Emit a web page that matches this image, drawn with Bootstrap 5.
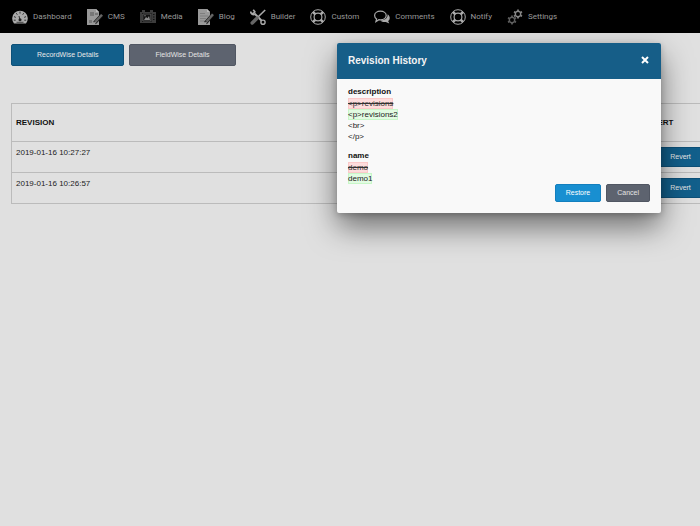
<!DOCTYPE html>
<html lang="en">
<head>
<meta charset="utf-8">
<meta name="viewport" content="width=device-width, initial-scale=1">
<title>Revision History</title>
<link rel="stylesheet" href="https://cdn.jsdelivr.net/npm/bootstrap@5.3.0/dist/css/bootstrap.min.css">
<style>
body { font-family: "Liberation Sans", Arial, sans-serif; font-size: 8px; line-height: 12px; background: #e0e0e0; color: #222; min-height: 100vh; }
.topbar { background: #000; height: 33px; padding: 0 12px; gap: 15px; }
.topbar a { color: #999; font-family: Roboto, sans-serif; gap: 5px; line-height: 16px; }
.topbar svg { width: 16px; height: 16px; flex: none; }
.btn { --bs-btn-font-size: 7px; --bs-btn-line-height: 12px; --bs-btn-padding-x: 10px; --bs-btn-padding-y: 2px; --bs-btn-border-radius: 2px; }
.btn-blue { --bs-btn-color: #e8e8e8; --bs-btn-bg: #125f8b; --bs-btn-border-color: #0d5078; --bs-btn-hover-bg: #0d5078; --bs-btn-hover-color: #fff; }
.btn-slate { --bs-btn-color: #e4e4e4; --bs-btn-bg: #5d636f; --bs-btn-border-color: #515763; --bs-btn-hover-bg: #515763; --bs-btn-hover-color: #fff; }
.btn-restore { --bs-btn-color: #fff; --bs-btn-bg: #188fd1; --bs-btn-border-color: #137fbe; --bs-btn-hover-bg: #137fbe; --bs-btn-hover-color: #fff; }
.view-switch { padding: 11px 11px 0; gap: 5px; }
.view-switch .btn { padding: 4px 25px; }
.page-shell { overflow-x: hidden; }
.revision-table { margin: 37px 0 0 11px; width: calc(100% + 13px); }
.revision-table th, .revision-table td { border-top: 1px solid #bbb; border-bottom: 1px solid #bbb; padding: 5px 4px; vertical-align: top; }
.revision-table th { height: 38px; vertical-align: middle; color: #111; }
.revision-table td { height: 31px; line-height: 12px; }
.revision-table tr > :first-child { border-left: 1px solid #bbb; }
.revision-table tr > :last-child { width: 87px; }
.revision-table .btn { padding: 3px 10px; display: block; }
.dialog-place { position: absolute; top: 43px; right: 39px; width: 324px; }
.dialog-place .modal-content { border: 0; border-radius: 2px; background: #f9f9f9; box-shadow: 0 14px 30px rgba(0,0,0,.5), 0 2px 6px rgba(0,0,0,.2); overflow: hidden; }
.dialog-place .modal-header { background: #165e88; color: #f4f4f4; padding: 10px 11px; border: 0; border-radius: 0; height: 36px; }
.dialog-place .modal-title { font-size: 10px; line-height: 16px; font-weight: 700; }
.dismiss { background: none; border: 0; padding: 0; width: 10px; height: 10px; line-height: 0; color: #fff; }
.dialog-place .modal-body { padding: 7px 11px 0; line-height: 11px; }
.diff-block + .diff-block { margin-top: 8px; }
.diff-block h2 { font-size: 8px; line-height: 12px; font-weight: 700; margin: 0; color: #111; }
.diff-block del, .diff-block ins { display: block; width: fit-content; }
.diff-block del { background: #fddcdc; box-shadow: inset 0 0 0 1px #fbc9c9; color: #333; }
.diff-block ins { background: #e2fbe2; box-shadow: inset 0 0 0 1px #c8f7c8; text-decoration: none; }
.dialog-place .modal-footer { border: 0; padding: 0 11px 11px; gap: 5px; }
.dialog-place .modal-footer > * { margin: 0; }
</style>
<script src="https://cdn.jsdelivr.net/npm/bootstrap@5.3.0/dist/js/bootstrap.bundle.min.js"></script>
</head>
<body>
<svg class="d-none" aria-hidden="true">
  <symbol id="ring" viewBox="0 0 16 16"><g fill="none" stroke="#aaa"><circle cx="8" cy="8" r="7.3"/><circle cx="8" cy="8" r="3.9" stroke-width="1.2"/><path stroke-width="2.6" d="M3 3l2.4 2.4M13 3l-2.4 2.4M3 13l2.4-2.4M13 13l-2.4-2.4"/></g></symbol>
  <symbol id="cog" viewBox="-5 -5 10 10"><g fill="none" stroke="currentColor"><circle r="2.7" stroke-width="1.4"/><path stroke-width="1.7" d="M0-3V-4.6M0 3V4.6M2.6-1.5L4-2.3M2.6 1.5L4 2.3M-2.6-1.5L-4-2.3M-2.6 1.5L-4 2.3"/></g></symbol>
</svg>
<nav class="topbar d-flex align-items-center text-nowrap" aria-label="Main">
  <a href="#" class="d-flex align-items-center text-decoration-none"><svg viewBox="0 0 16 16"><path fill="#aaa" d="M2 14.5a7.8 7.8 0 1 1 12 0z"/><g stroke="#222" stroke-width=".9"><path d="M8 2.6v2M4.300 4.200l1 1.500M11.700 4.200l-1 1.500M2 7.600l1.800.8M14 7.600l-1.800.8M1.800 11.200h1.900M12.300 11.200h1.900M8 11l-1-4"/></g><circle cx="8" cy="10.800" r="1.500" fill="#222"/><path stroke="#444" d="M4.500 13.300h7"/></svg>Dashboard</a>
  <a href="#" class="d-flex align-items-center text-decoration-none"><svg viewBox="0 0 16 16"><path fill="#999" d="M0 0h9l3 3v13H0z"/><path fill="#777" d="M3 3h4v4H3zM8 4h3v2H8zM2 11h3v3H2z"/><path fill="#bbb" d="M9 0v3h3z"/><path stroke="#111" stroke-width="3.500" d="M7.500 14L15 6"/><path stroke="#666" stroke-width="2.400" d="M8.300 13L15 5.800"/><path fill="#aaa" d="M7 15l.5-2.600 1.800 1.500z"/></svg>CMS</a>
  <a href="#" class="d-flex align-items-center text-decoration-none"><svg viewBox="0 0 16 16"><path fill="#3c3c3c" d="M2 1h3v2h5V1h3v2h3v11H0V3h2z"/><path fill="#111" d="M2 4h9.500v9H2z"/><path fill="none" stroke="#666" stroke-width=".8" d="M2.800 5h8v7h-8z"/><path fill="#888" d="M4 11l2-3 1.400 1.300L9 7l1 4z"/><circle cx="5" cy="6.700" r=".7" fill="#888"/><path stroke="#111" d="M13 5.500h1.500M13 8h1.500M13 10.500h1.500"/></svg>Media</a>
  <a href="#" class="d-flex align-items-center text-decoration-none"><svg viewBox="0 0 16 16"><path fill="#999" d="M0 0h9l3 3v13H0z"/><path fill="#bbb" d="M9 0v3h3z"/><path stroke="#777" stroke-width=".8" d="M2 4.500h5M2 7h8M2 9.500h6M2 12h5"/><path stroke="#111" stroke-width="3.500" d="M7.500 14L15 5.500"/><path stroke="#666" stroke-width="2.400" d="M8.500 12.800L15 5.200"/><path fill="#aaa" d="M7 15l.5-2.600 1.800 1.500z"/></svg>Blog</a>
  <a href="#" class="d-flex align-items-center text-decoration-none"><svg viewBox="0 0 16 16"><g fill="none"><path stroke="#aaa" stroke-width="2" d="M4.500 4.500l7.200 7.200"/><path stroke="#aaa" stroke-width="1.700" d="M3.200.8l1.600 2-1.400 2-2.600-.8M.8 2.500a2.800 2.800 0 0 0 4 2.800"/><circle cx="13" cy="13.200" r="2.100" stroke="#aaa" stroke-width="1.400"/><path stroke="#aaa" stroke-width="1.600" d="M15.200 1L8.500 7.500"/><path stroke="#666" stroke-width="3.500" stroke-linecap="round" d="M7 9.200L2.200 14"/></g></svg>Builder</a>
  <a href="#" class="d-flex align-items-center text-decoration-none"><svg><use href="#ring"/></svg>Custom</a>
  <a href="#" class="d-flex align-items-center text-decoration-none"><svg viewBox="0 0 16 16"><path fill="#aaa" d="M13.500 5.200c2.800 1.900 3 5 .6 6.800l1.200 2.500-3.500-1.500c-2.200.3-4.200-.2-5.300-1.500 4.400 0 7.600-2.600 7-6.300z"/><path fill="#000" stroke="#aaa" stroke-width="1.200" d="M6.400 2.200c3.300 0 5.800 1.900 5.800 4.300s-2.500 4.300-5.800 4.300l-1.500-.1-3 1.900.7-2.700C1.300 9.100.6 7.900.6 6.500.6 4.100 3.100 2.200 6.400 2.200z"/></svg>Comments</a>
  <a href="#" class="d-flex align-items-center text-decoration-none"><svg><use href="#ring"/></svg>Notify</a>
  <a href="#" class="d-flex align-items-center text-decoration-none"><svg viewBox="0 0 16 16"><use href="#cog" x="6" y="0" width="10" height="10" color="#888"/><use href="#cog" x="0" y="6" width="10" height="10" color="#606060"/></svg>Settings</a>
</nav>
<main class="page-shell">
  <div class="view-switch d-flex">
    <button type="button" class="btn btn-blue">RecordWise Details</button>
    <button type="button" class="btn btn-slate">FieldWise Details</button>
  </div>
  <table class="revision-table">
    <thead><tr><th scope="col">REVISION</th><th scope="col">REVERT</th></tr></thead>
    <tbody>
      <tr><td>2019-01-16 10:27:27</td><td><button type="button" class="btn btn-blue w-100">Revert</button></td></tr>
      <tr><td>2019-01-16 10:26:57</td><td><button type="button" class="btn btn-blue w-100">Revert</button></td></tr>
    </tbody>
  </table>
</main>
<div class="dialog-place" role="dialog" aria-labelledby="dialog-title">
  <div class="modal-content">
    <div class="modal-header d-flex align-items-center justify-content-between">
      <h1 class="modal-title" id="dialog-title">Revision History</h1>
      <button type="button" class="dismiss" aria-label="Close"><svg width="10" height="10" viewBox="0 0 10 10"><path stroke="currentColor" stroke-width="2" d="M2 1l6 6M8 1l-6 6"/></svg></button>
    </div>
    <div class="modal-body">
      <section class="diff-block">
        <h2>description</h2>
        <del>&lt;p&gt;revisions</del>
        <ins>&lt;p&gt;revisions2</ins>
        <div>&lt;br&gt;</div>
        <div>&lt;/p&gt;</div>
      </section>
      <section class="diff-block">
        <h2>name</h2>
        <del>demo</del>
        <ins>demo1</ins>
      </section>
    </div>
    <div class="modal-footer d-flex justify-content-end">
      <button type="button" class="btn btn-restore">Restore</button>
      <button type="button" class="btn btn-slate">Cancel</button>
    </div>
  </div>
</div>
</body>
</html>
